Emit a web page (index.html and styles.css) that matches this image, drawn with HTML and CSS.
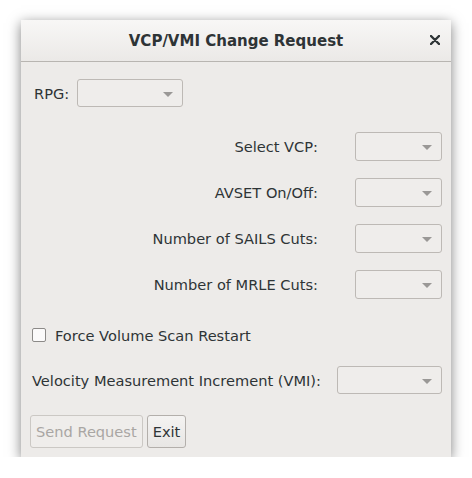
FILE: index.html
```html
<!DOCTYPE html>
<html lang="en">
<head>
  <meta charset="UTF-8" />
  <title>VCP/VMI Change Request</title>
  <link rel="stylesheet" href="styles.css">
</head>
<body>
  <div class="window">
    <header class="titlebar">
      <h1>VCP/VMI Change Request</h1>
      <svg class="close" width="10" height="10" viewBox="0 0 10 10">
        <path d="M1 1 L9 9 M9 1 L1 9" stroke="#2e3436" stroke-width="2.4" stroke-linecap="round" />
      </svg>
    </header>

    <main class="content">
      <div class="rpg-row">
        <label>RPG:</label>
        <div class="combo rpg-combo"><span class="arrow"></span></div>
      </div>

      <div class="settings">
        <label>Select VCP:</label>
        <div class="combo"><span class="arrow"></span></div>
        <label>AVSET On/Off:</label>
        <div class="combo"><span class="arrow"></span></div>
        <label>Number of SAILS Cuts:</label>
        <div class="combo"><span class="arrow"></span></div>
        <label>Number of MRLE Cuts:</label>
        <div class="combo"><span class="arrow"></span></div>
      </div>

      <div class="check-row">
        <span class="checkbox"></span>
        <label>Force Volume Scan Restart</label>
      </div>

      <div class="vmi-row">
        <label>Velocity Measurement Increment (VMI):</label>
        <div class="combo vmi-combo"><span class="arrow"></span></div>
      </div>

      <div class="buttons">
        <button class="btn" disabled>Send Request</button>
        <button class="btn">Exit</button>
      </div>
    </main>
  </div>
</body>
</html>
```

FILE: styles.css
```css
body {
  margin: 0;
  padding: 20px 0 0 21px;
  background: #fff;
  font-family: 'DejaVu Sans', sans-serif;
  font-size: 14.6px;
  color: #2e3436;
}

.window {
  width: 430px;
  height: 437px;
  background: #edebe9;
  box-shadow: 0 3px 12px rgba(0,0,0,0.5);
  box-sizing: border-box;
}

.titlebar {
  height: 42px;
  box-sizing: border-box;
  border-bottom: 1px solid #b8b5b1;
  background: linear-gradient(#f8f7f6, #ebe9e7);
  display: flex;
  align-items: center;
  justify-content: center;
  position: relative;
}

.titlebar h1 {
  margin: 0;
  font-size: 15px;
  font-weight: bold;
  color: #2e3436;
}

.close {
  position: absolute;
  right: 11px;
  top: 15px;
}

.content {
  padding: 17px 9px 0 11px;
}

label {
  white-space: nowrap;
}

.combo {
  height: 29px;
  box-sizing: border-box;
  border: 1px solid #bdb9b5;
  border-radius: 3px;
  background: #efedeb;
  position: relative;
}

.arrow {
  position: absolute;
  right: 9px;
  top: 12px;
  border-left: 5px solid transparent;
  border-right: 5px solid transparent;
  border-top: 5px solid #9a9896;
}

.rpg-row {
  display: flex;
  align-items: center;
  gap: 8px;
  padding-left: 2px;
}

.rpg-combo {
  width: 106px;
  height: 28px;
}

.settings {
  margin-top: 25px;
  display: grid;
  grid-template-columns: 1fr 87px;
  grid-auto-rows: 29px;
  column-gap: 37px;
  row-gap: 17px;
  align-items: center;
}

.settings label {
  text-align: right;
}

.check-row {
  margin-top: 26px;
  height: 20px;
  display: flex;
  align-items: center;
  gap: 9px;
}

.checkbox {
  width: 12px;
  height: 12px;
  border: 1px solid #8c8a88;
  border-radius: 2px;
  background: #fbfafa;
}

.vmi-row {
  margin-top: 21px;
  display: flex;
  align-items: center;
  gap: 15px;
}

.vmi-combo {
  width: 105px;
  height: 28px;
  margin-left: auto;
}

.buttons {
  margin-top: 21px;
  margin-left: -2px;
  display: flex;
  gap: 4px;
}

.btn {
  height: 33px;
  padding: 0 5px;
  font-family: inherit;
  font-size: 14.6px;
  color: #2e3436;
  border: 1px solid #b3afab;
  border-radius: 3px;
  background: linear-gradient(#f4f3f2, #e8e6e4);
}

.btn:disabled {
  color: #a9a6a3;
  border-color: #cbc8c4;
  background: #efedeb;
}
```
